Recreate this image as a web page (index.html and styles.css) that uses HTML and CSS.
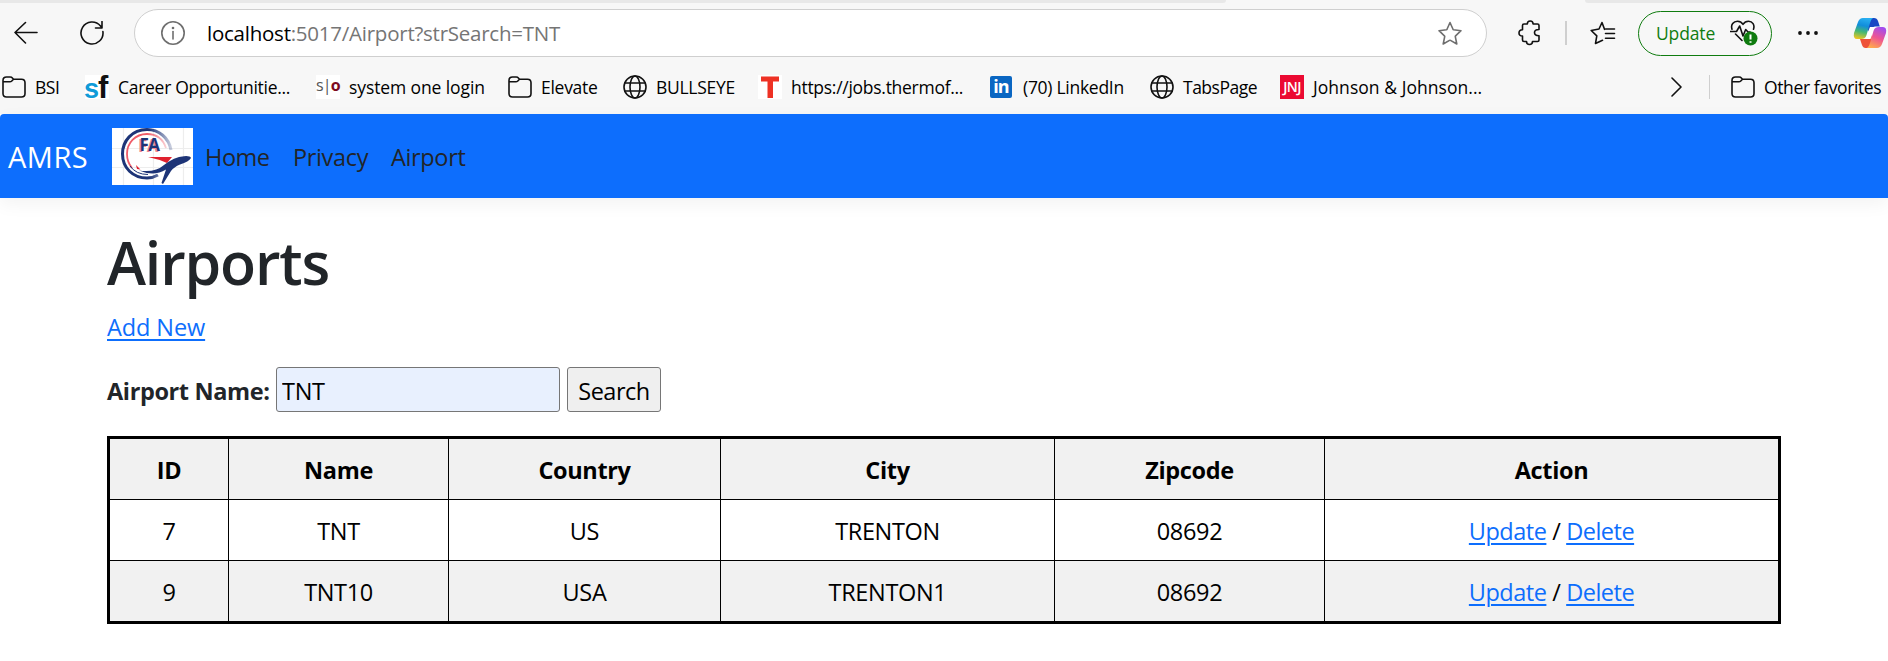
FILE: index.html
```html
<!DOCTYPE html>
<html lang="en">
<head>
<meta charset="utf-8">
<title>Airports - AMRS</title>
<link rel="stylesheet" href="styles.css">
</head>
<body>
<svg class="defs" width="0" height="0">
  <symbol id="folder" viewBox="0 0 24 24"><path d="M1 18.500V5.500Q1 2 4.500 2H8.200Q9.600 2 10.400 3L11.500 4.300H19.500Q23 4.300 23 7.800V18.500Q23 22 19.500 22H4.500Q1 22 1 18.500ZM1.200 6.800H7.800Q9 6.800 9.800 6L11.500 4.300"/></symbol>
  <symbol id="globe" viewBox="0 0 24 24"><circle cx="12" cy="12" r="11"/><ellipse cx="12" cy="12" rx="5" ry="11"/><path d="M2 8H22M2 16H22"/></symbol>
</svg>
<div class="browser">
  <div class="tabstrip"><span class="tabs-left"></span><span class="tabs-right"></span></div>
  <div class="toolbar">
    <svg class="icon back" width="24" height="24" viewBox="0 0 24 24"><path d="M23 11.500H1M11.500 1.500L1 11.500L11.500 22"/></svg>
    <svg class="icon reload" width="24" height="24" viewBox="0 0 24 24"><path d="M22.900 10.500A11 11 0 1 1 20.500 5L22 6.800M22 .5V7H15.500"/></svg>
    <div class="address">
      <svg class="icon muted" width="24" height="24" viewBox="0 0 24 24"><circle cx="12" cy="12" r="11.200"/><path d="M12 10.500V18"/><circle class="dot" cx="12" cy="7" r="1.300"/></svg>
      <span class="url"><b>localhost</b>:5017/Airport?strSearch=TNT</span>
      <svg class="icon muted star" width="24" height="24" viewBox="0 0 24 24"><path d="M12 1.500L15 8.300Q15.200 8.700 15.600 8.800L23 9.700L17.600 14.800Q17.200 15.200 17.300 15.700L18.800 23L12.500 19.400Q12 19.100 11.500 19.400L5.200 23L6.700 15.700Q6.800 15.200 6.400 14.800L1 9.700L8.400 8.800Q8.800 8.700 9 8.300Z"/></svg>
    </div>
    <svg class="icon puzzle" width="24" height="26" viewBox="0 0 24 26"><path d="M4.500 5.500Q4.500 4 6 4H9.300Q9.300 1 12.200 1T15.100 4H19.500Q21 4 21 5.500V9.500Q16.500 9.500 16.500 12.600T21 15.700V20Q21 21.500 19.500 21.500H14.500Q14.500 24.500 11.500 24.500T8.500 21.500H6Q4.500 21.500 4.500 20V16Q1 16 1 12.900T4.500 9.800Z"/></svg>
    <span class="rule"></span>
    <svg class="icon favs" width="26" height="24" viewBox="0 0 26 24"><path d="M14.500 8.300L12 1.500L9 8L1.200 9.500L6.800 14.800L5.500 22.500L12.500 19.300M15.500 8H24.500M15.500 12.500H24.500M15.500 17.200H24.500"/></svg>
    <div class="update"><span>Update</span>
      <svg class="icon" width="28" height="26" viewBox="0 0 28 26"><path d="M2 9.200C.5 4.500 3.500 1.300 7.500 1.300Q11 1.300 13 4.300Q15 1.300 18.500 1.300C22.500 1.300 25 5 23.500 9.200M0 11.500H6.500L9.700 6L13 16L15.700 9.500L18 12H20M5.500 14L12 20.500"/><circle class="badge" cx="20.500" cy="18.500" r="7"/><path class="bang" d="M20.500 14.500V19.500M20.500 21.300V22.800"/></svg>
    </div>
    <svg class="more" width="20" height="4" viewBox="0 0 20 4"><circle cx="2" cy="2" r="1.900"/><circle cx="10" cy="2" r="1.900"/><circle cx="18" cy="2" r="1.900"/></svg>
    <svg class="copilot" width="34" height="32" viewBox="0 0 34 32">
      <defs>
        <linearGradient id="ca" x1=".5" y1="0" x2=".3" y2="1"><stop offset="0" stop-color="#28aef0"/><stop offset=".35" stop-color="#118ddb"/><stop offset=".65" stop-color="#45b873"/><stop offset="1" stop-color="#edc520"/></linearGradient>
        <linearGradient id="cb" x1=".7" y1="0" x2=".3" y2="1"><stop offset="0" stop-color="#a14df0"/><stop offset=".5" stop-color="#ee5593"/><stop offset="1" stop-color="#ffa84e"/></linearGradient>
      </defs>
      <path fill="#1748c5" d="M14 1H21Q24 1 25 4L26.800 9.500H22Q19 9.500 18 12L15 15Z"/>
      <path fill="#ee5238" d="M18 31H12.500Q10 31 9 28L7 22H12Q14 22 15 20L19 17Z"/>
      <path fill="#fff" d="M17 10L22 10L17.500 22L12 22Z"/>
      <path fill="url(#ca)" d="M10 1H20Q18 2 17 6L13.500 18Q12.500 22 8 22H4Q0 22 1 16L5 5Q6.500 1 10 1Z"/>
      <path fill="url(#cb)" d="M24 31H14Q16 30 17 26L20.500 14Q21.500 10 26 10H30Q34 10 33 16L29 27Q27.500 31 24 31Z"/>
    </svg>
  </div>
  <div class="bookmarks">
    <div class="bm"><svg class="icon"><use href="#folder"/></svg><span class="tight">BSI</span></div>
    <div class="bm"><svg class="fav-sf" width="24" height="24" viewBox="0 0 24 24"><path fill="#fff" d="M0 0H24V24H0Z"/><text class="s" x="-1" y="23">s</text><text x="13" y="23">f</text></svg><span>Career Opportunitie...</span></div>
    <div class="bm"><span class="fav so">s|<i>o</i></span><span class="wide">system one login</span></div>
    <div class="bm"><svg class="icon"><use href="#folder"/></svg><span>Elevate</span></div>
    <div class="bm"><svg class="icon"><use href="#globe"/></svg><span>BULLSEYE</span></div>
    <div class="bm"><svg width="24" height="24" viewBox="0 0 24 24"><path fill="#fff" d="M0 0H24V24H0Z"/><path fill="#ee3124" d="M3 1.500H21V6.500H15V23H9.500V6.500H3Z"/></svg><span>https://jobs.thermof...</span></div>
    <div class="bm"><span class="fav li">in</span><span>(70) LinkedIn</span></div>
    <div class="bm"><svg class="icon"><use href="#globe"/></svg><span class="tight2">TabsPage</span></div>
    <div class="bm"><span class="fav jnj">JNJ</span><span class="wide2">Johnson &amp; Johnson...</span></div>
    <svg class="icon chevron" width="12" height="20" viewBox="0 0 12 20"><path d="M1 1L10 10L1 19"/></svg>
    <span class="rule thin"></span>
    <div class="bm other"><svg class="icon"><use href="#folder"/></svg><span>Other favorites</span></div>
  </div>
</div>
<header class="navbar">
  <a class="brand">AMRS</a>
  <svg class="logo" width="81" height="57" viewBox="0 0 81 57">
    <defs><linearGradient id="fade" x1="0" y1="0" x2="1" y2="0"><stop offset=".55" stop-color="#1d3477"/><stop offset="1" stop-color="#1d3477" stop-opacity=".25"/></linearGradient>
    <linearGradient id="fadered" x1="0" y1="0" x2="1" y2="0"><stop offset=".5" stop-color="#ef5c68"/><stop offset="1" stop-color="#ef5c68" stop-opacity=".3"/></linearGradient></defs>
    <path fill="#fff" d="M0 0H81V57H0Z"/>
    <path class="grid" d="M11.500 0V57M41.500 0V57M71.500 0V57M0 20.500H81M0 39.500H81"/>
    <path fill="none" stroke="url(#fade)" stroke-width="3" d="M59 22C57 10 47 1.500 35 1.500C20 1.500 10.500 13 10.500 26C10.500 40 21 50 35 50Q41 50 46 47"/>
    <path fill="none" stroke="url(#fadered)" stroke-width="1.800" d="M54 20C51 11 44 6 35 6C23 6 15 15 15 26Q15 34 20 40"/>
    <path fill="none" stroke="#1d3477" stroke-width="1" d="M18 38Q24 46.500 36 46.500"/>
    <path fill="#e0212f" d="M36 29H60L55 35Q46 31 36 29ZM24 37L28.500 41.500L25 41Z"/>
    <path fill="#1d3477" d="M27 42.500Q43 45 52 37Q62 29 72 28.200Q78 27.600 79 30Q77 33.500 68 36.500Q62 39 59 43L51 56L49.500 55L54 41.500Q42 49 27 42.500Z"/>
    <text class="logo-shadow" x="26" y="24">FA</text><text class="logo-text" x="27.500" y="23">FA</text>
  </svg>
  <nav><a class="home">Home</a><a class="privacy">Privacy</a><a>Airport</a></nav>
</header>
<main>
  <h1>Airports</h1>
  <p class="add"><a class="link">Add New</a></p>
  <form class="search"><label for="q">Airport Name:</label><input id="q" type="text" value="TNT"><button type="button">Search</button></form>
  <table>
    <colgroup><col class="c1"><col class="c2"><col class="c3"><col class="c4"><col class="c5"><col class="c6"></colgroup>
    <tr><th>ID</th><th>Name</th><th>Country</th><th>City</th><th>Zipcode</th><th>Action</th></tr>
    <tr><td>7</td><td>TNT</td><td>US</td><td>TRENTON</td><td>08692</td><td><a class="link">Update</a> / <a class="link">Delete</a></td></tr>
    <tr><td>9</td><td>TNT10</td><td>USA</td><td>TRENTON1</td><td>08692</td><td><a class="link">Update</a> / <a class="link">Delete</a></td></tr>
  </table>
</main>
</body>
</html>
```
FILE: styles.css
```css
* { box-sizing: border-box; }
body {
  margin: 0;
  background: #fff;
  color: #212529;
  font: 23.5px/36px "Open Sans", "Noto Sans", sans-serif;
  letter-spacing: -0.35px;
  overflow: hidden;
}
.defs { position: absolute; }
.browser { height: 114px; background: #f7f7f7; color: #000; }
.tabstrip { display: flex; justify-content: space-between; height: 3px; }
.tabs-left { width: 1226px; background: #e8e8e8; border-bottom-right-radius: 4px; }
.tabs-right { width: 303px; background: #e8e8e8; border-bottom-left-radius: 4px; }
.icon { flex: none; fill: none; stroke: #111; stroke-width: 1.6; stroke-linecap: round; stroke-linejoin: round; }
.muted { stroke: #6e6e6e; }
.muted .dot { fill: #6e6e6e; stroke: none; }

.toolbar { display: flex; align-items: center; height: 60px; padding-left: 14px; }
.reload { margin-left: 42px; }
.address {
  display: flex; align-items: center;
  width: 1353px; height: 48px; margin-left: 30px; padding: 0 24px 0 26px;
  background: #fff; border: 1.5px solid #cfcfcf; border-radius: 24px;
}
.url { margin-left: 22px; font-size: 20.5px; letter-spacing: -0.24px; color: #757575; white-space: nowrap; }
.url b { font-weight: 400; color: #000; }
.star { margin-left: auto; }
.puzzle { margin-left: 31px; }
.rule { width: 2px; height: 24px; margin-left: 23px; background: #cfcfcf; }
.favs { margin-left: 23px; }
.update {
  display: flex; align-items: center;
  width: 134px; height: 45px; margin-left: 22px; padding-left: 17px;
  border: 1.5px solid #107c10; border-radius: 23px;
  color: #107c10; font-size: 17.5px; letter-spacing: -0.15px;
}
.update span { width: 74px; }
.badge { fill: #0f7b0f; stroke: none; }
.bang { stroke: #fff; stroke-width: 2; stroke-linecap: butt; }
.more { margin-left: 26px; fill: #111; }
.copilot { margin-left: 35px; flex: none; }

.bookmarks {
  display: grid; align-items: center; height: 48px; padding-left: 2px;
  grid-template-columns: 83px 231px 192px 115px 135px 232px 160px 130px 391px 38px 22px auto;
  font-size: 17.5px; letter-spacing: -0.28px;
}
.bm { display: flex; align-items: center; gap: 9px; white-space: nowrap; }
.bm svg { width: 24px; height: 24px; flex: none; }
.bm .tight { letter-spacing: -0.5px; }
.bm .tight2 { letter-spacing: -0.5px; }
.bm .wide { letter-spacing: -0.1px; }
.bm .wide2 { letter-spacing: 0.05px; }
.bm.other { letter-spacing: -0.38px; }
.fav {
  flex: none; width: 24px; height: 24px;
  background: #fff; text-align: center; line-height: 24px;
}
.fav i { font-style: normal; }
.fav-sf { overflow: visible; }
.fav-sf text { font: 700 31px "Liberation Sans", Arial, sans-serif; letter-spacing: 0; fill: #111; }
.fav-sf .s { font-size: 27px; fill: #0f9bd8; }
.so { font-size: 16px; line-height: 21px; letter-spacing: -0.8px; color: #555; }
.so i { font-weight: 700; color: #7c0a20; }
.li { height: 22px; width: 22px; margin-right: 2px; border-radius: 2px; background: #0a66c2; color: #fff; font: 700 18px/20px "Open Sans", sans-serif; letter-spacing: -1px; }
.jnj { background: #eb0a32; color: #fff; font: 600 14px/24px "Open Sans", sans-serif; letter-spacing: -0.6px; }
.thin { width: 1px; margin: 0; }

.navbar {
  display: flex; align-items: center; height: 84px; padding-left: 8px;
  background: #0d6efd; border-radius: 4px 4px 0 0;
  box-shadow: 0 6px 18px rgba(0, 0, 0, 0.05);
}
.brand { width: 104px; padding-top: 1px; color: #fff; font-size: 29px; letter-spacing: 0.5px; }
.logo .grid { fill: none; stroke: #ededed; stroke-width: 1.2; }
.logo text { font: 700 17px "Open Sans", sans-serif; letter-spacing: -0.5px; }
.logo-shadow { fill: #f28a92; }
.logo-text { fill: #1d3477; }
.navbar nav { display: flex; padding: 2px 0 0 12px; }
.home { width: 88px; letter-spacing: -0.45px; }
.privacy { width: 98px; }

main { padding: 32px 107px 0; }
h1 { margin: 0 0 15px; font-size: 59px; font-weight: 600; line-height: 64px; letter-spacing: -1.15px; }
p { margin: 0; }
.link { color: #0d6efd; text-decoration: underline; text-decoration-thickness: 2px; text-underline-offset: 3px; }
.add .link { letter-spacing: -0.1px; }
.search { display: flex; align-items: center; margin-top: 22px; height: 45px; }
label { width: 169px; padding-top: 3px; font-weight: 700; letter-spacing: -0.38px; white-space: nowrap; }
input, button { height: 45px; margin: 0; border: 1px solid #767676; border-radius: 3px; font: inherit; letter-spacing: -0.3px; color: #000; }
input { width: 284px; padding: 3px 5px 0; background: #e8f0fe; }
button { width: 94px; margin-left: 7px; padding: 3px 0 0; background: #efefef; letter-spacing: -0.5px; }
table {
  width: 1674px; height: 188px; margin-top: 24px; table-layout: fixed; border-collapse: collapse;
  border: 3px solid #000; color: #000; text-align: center;
}
th, td { height: 61px; padding: 2px 0 0; border: 1px solid #000; }
tr:nth-child(odd) { background: #f1f1f1; }
.c1 { width: 120px; }
.c2 { width: 220px; }
.c3 { width: 272px; }
.c4 { width: 334px; }
.c5 { width: 270px; }
td .link { letter-spacing: -0.5px; }
```
